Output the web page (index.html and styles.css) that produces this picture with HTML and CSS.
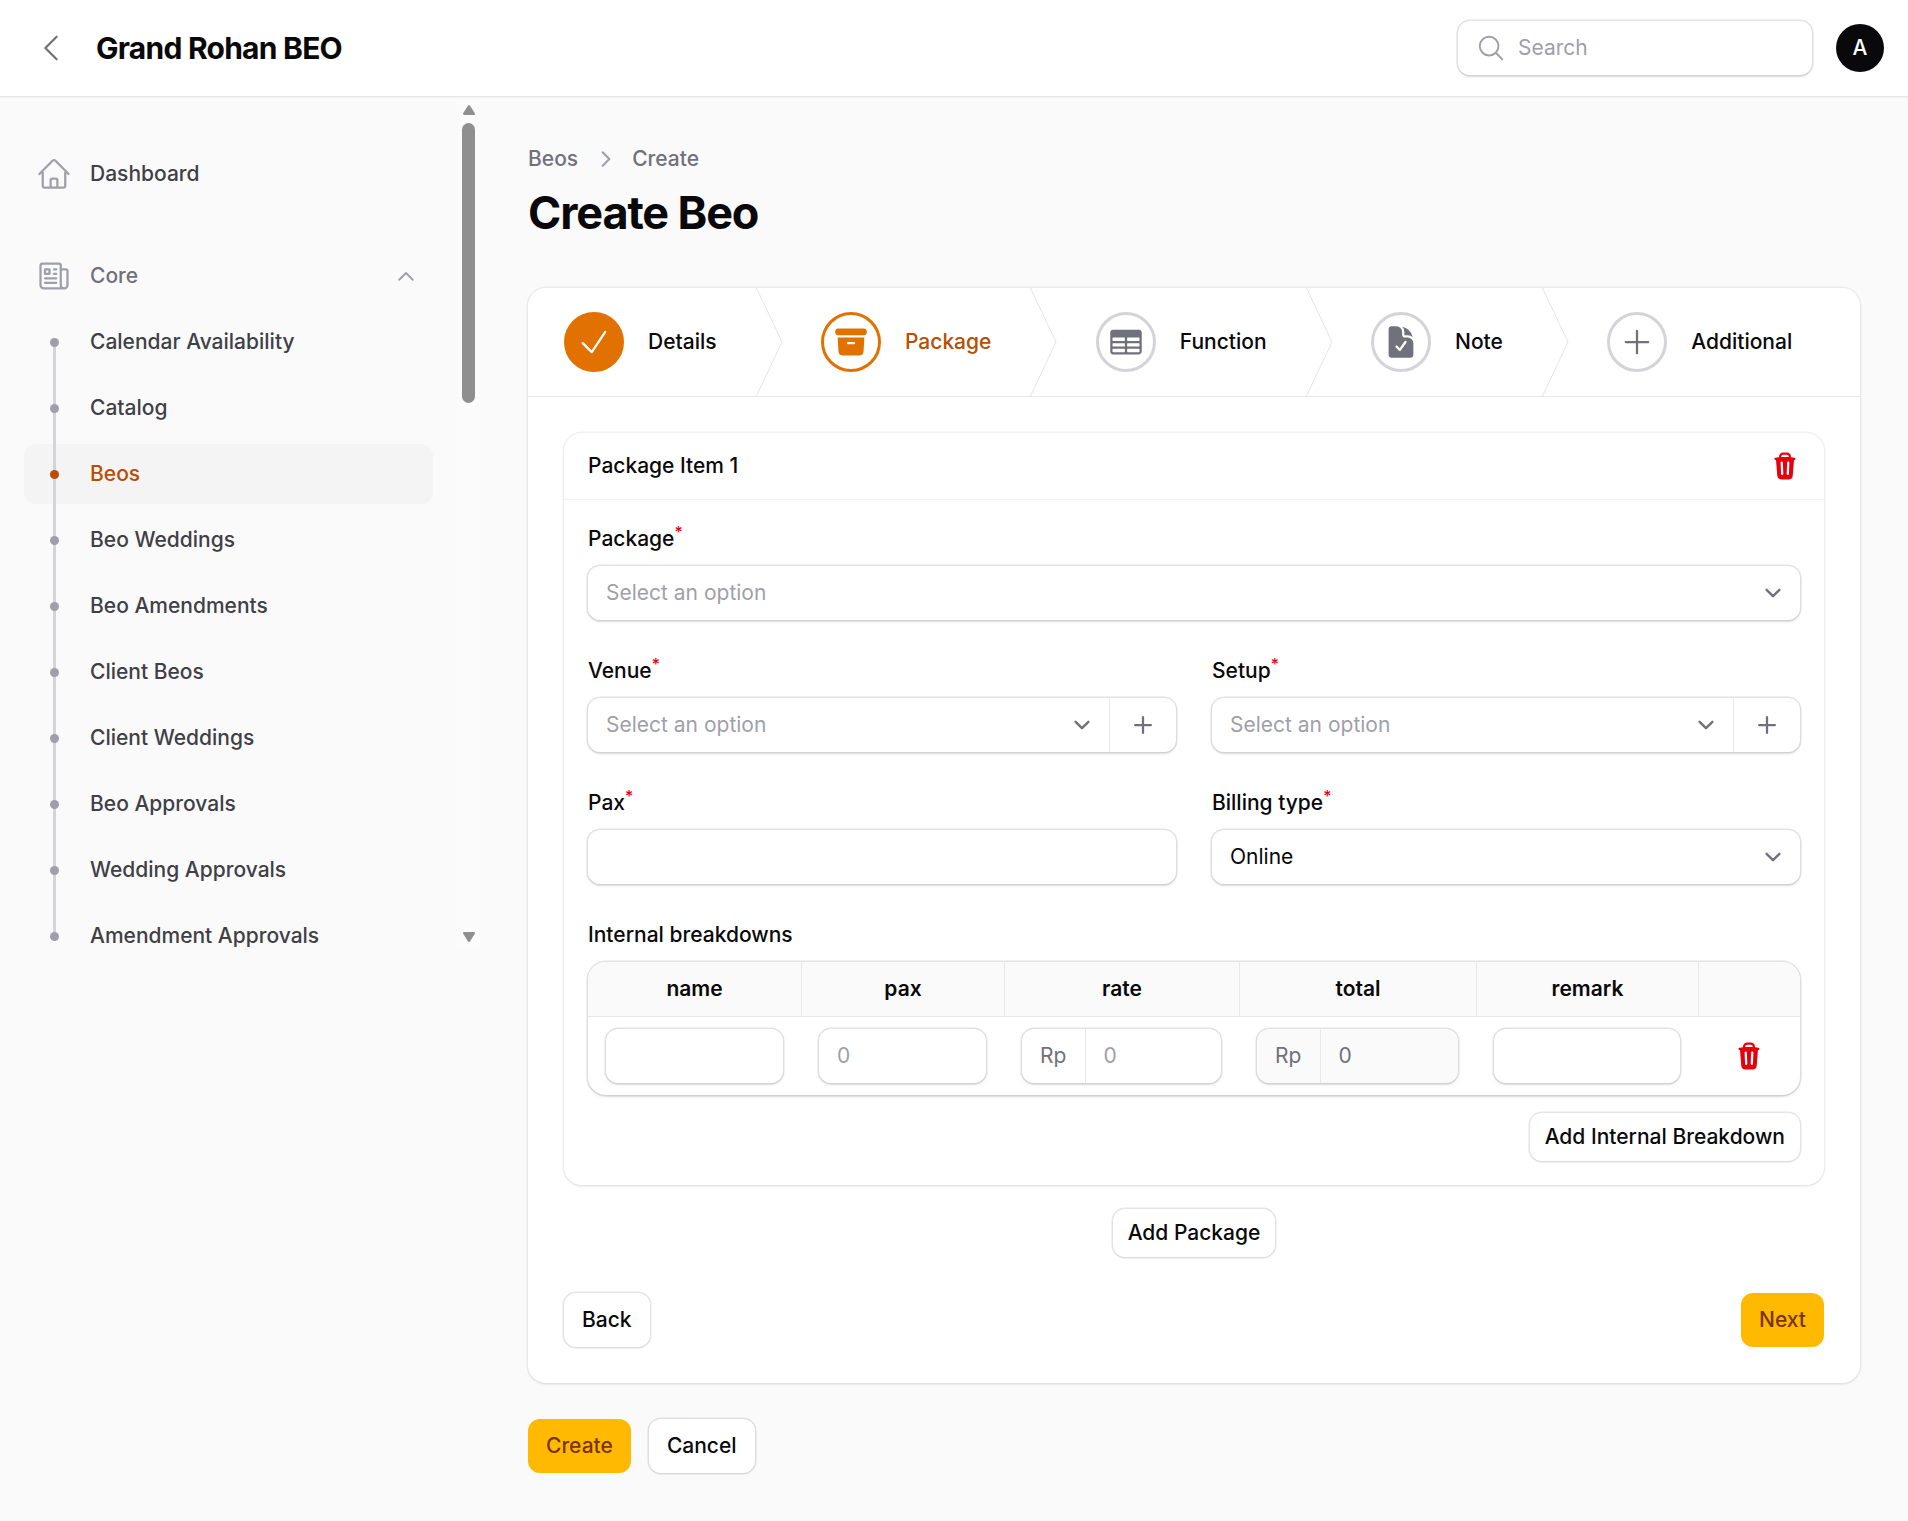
FILE: index.html
```html
<!DOCTYPE html>
<html lang="en">
<head>
<meta charset="UTF-8">
<meta name="viewport" content="width=device-width, initial-scale=1.0">
<title>Create Beo</title>
<link rel="stylesheet" href="styles.css">
</head>
<body>
<svg class="sprite" xmlns="http://www.w3.org/2000/svg">
  <symbol id="i-trash" viewBox="0 0 20 20"><path fill="currentColor" fill-rule="evenodd" clip-rule="evenodd" d="M8.75 1A2.75 2.75 0 006 3.75v.443c-.795.077-1.584.176-2.365.298a.75.75 0 10.23 1.482l.149-.022.841 10.518A2.75 2.75 0 007.596 19h4.807a2.75 2.75 0 002.742-2.53l.841-10.52.149.023a.75.75 0 00.23-1.482A41.03 41.03 0 0014 4.193V3.75A2.75 2.75 0 0011.25 1h-2.5zM10 4c.84 0 1.673.025 2.5.075V3.75c0-.69-.56-1.25-1.25-1.25h-2.5c-.69 0-1.25.56-1.25 1.25v.325C8.327 4.025 9.16 4 10 4zM8.58 7.72a.75.75 0 00-1.5.06l.3 7.5a.75.75 0 101.5-.06l-.3-7.5zm4.34.06a.75.75 0 10-1.5-.06l-.3 7.5a.75.75 0 101.5.06l.3-7.5z"/></symbol>
  <symbol id="i-plus-mini" viewBox="0 0 20 20"><path fill="currentColor" d="M10.75 4.75a.75.75 0 00-1.5 0v4.5h-4.5a.75.75 0 000 1.5h4.5v4.5a.75.75 0 001.5 0v-4.5h4.5a.75.75 0 000-1.5h-4.5v-4.5z"/></symbol>
  <symbol id="i-select" viewBox="0 0 20 20"><path fill="none" stroke="currentColor" stroke-width="1.5" stroke-linecap="round" stroke-linejoin="round" d="M6 8l4 4 4-4"/></symbol>
</svg>

<header class="topbar">
  <svg class="icon-36 back-icon" viewBox="0 0 24 24" fill="none" stroke="currentColor" stroke-width="1.5" stroke-linecap="round" stroke-linejoin="round"><path d="M15.75 19.5L8.25 12l7.5-7.5"/></svg>
  <div class="brand">Grand Rohan BEO</div>
  <div class="search">
    <svg class="icon-30" viewBox="0 0 24 24" fill="none" stroke="currentColor" stroke-width="1.5" stroke-linecap="round" stroke-linejoin="round"><path d="M21 21l-5.197-5.197m0 0A7.5 7.5 0 105.196 5.196a7.5 7.5 0 0010.607 10.607z"/></svg>
    <span>Search</span>
  </div>
  <div class="avatar">A</div>
</header>

<div class="layout">
  <aside class="sidebar">
    <nav class="nav">
      <a class="nav-item nav-top">
        <svg class="icon-36" viewBox="0 0 24 24" fill="none" stroke="currentColor" stroke-width="1.5" stroke-linecap="round" stroke-linejoin="round"><path d="M2.25 12l8.954-8.955a1.125 1.125 0 011.591 0L21.75 12M4.5 9.75v10.125c0 .621.504 1.125 1.125 1.125H9.75v-4.875c0-.621.504-1.125 1.125-1.125h2.25c.621 0 1.125.504 1.125 1.125V21h4.125c.621 0 1.125-.504 1.125-1.125V9.75M8.25 21h8.25"/></svg>
        <span>Dashboard</span>
      </a>
      <div class="nav-group">
        <svg class="icon-36" viewBox="0 0 24 24" fill="none" stroke="currentColor" stroke-width="1.5" stroke-linecap="round" stroke-linejoin="round"><path d="M12 7.5h1.5m-1.5 3h1.5m-7.5 3h7.5m-7.5 3h7.5m3-9h3.375c.621 0 1.125.504 1.125 1.125V18a2.25 2.25 0 01-2.25 2.25M16.5 7.5V18a2.25 2.25 0 002.25 2.25M16.5 7.5V4.875c0-.621-.504-1.125-1.125-1.125H4.125C3.504 3.75 3 4.254 3 4.875V18a2.25 2.25 0 002.25 2.25h13.5M6 7.5h3v3H6v-3z"/></svg>
        <span>Core</span>
        <svg class="icon-30 group-chevron" viewBox="0 0 20 20" fill="none" stroke="currentColor" stroke-width="1.25" stroke-linecap="round" stroke-linejoin="round"><path d="M5.5 12.5L10 8l4.5 4.5"/></svg>
      </div>
      <ul class="sub-list">
        <li class="nav-item"><i class="dot"></i><span>Calendar Availability</span></li>
        <li class="nav-item"><i class="dot"></i><span>Catalog</span></li>
        <li class="nav-item active"><i class="dot"></i><span>Beos</span></li>
        <li class="nav-item"><i class="dot"></i><span>Beo Weddings</span></li>
        <li class="nav-item"><i class="dot"></i><span>Beo Amendments</span></li>
        <li class="nav-item"><i class="dot"></i><span>Client Beos</span></li>
        <li class="nav-item"><i class="dot"></i><span>Client Weddings</span></li>
        <li class="nav-item"><i class="dot"></i><span>Beo Approvals</span></li>
        <li class="nav-item"><i class="dot"></i><span>Wedding Approvals</span></li>
        <li class="nav-item"><i class="dot"></i><span>Amendment Approvals</span></li>
      </ul>
    </nav>
    <div class="scrollbar">
      <svg class="scroll-arrow" viewBox="0 0 11 9"><path d="M5.5 1L10 8H1z"/></svg>
      <div class="scroll-thumb"></div>
      <svg class="scroll-arrow scroll-down" viewBox="0 0 11 9"><path d="M1 1h9L5.5 8z"/></svg>
    </div>
  </aside>

  <main class="main">
    <div class="breadcrumb">
      <span>Beos</span>
      <svg class="icon-30" viewBox="0 0 20 20" fill="none" stroke="currentColor" stroke-width="1.4" stroke-linecap="round" stroke-linejoin="round"><path d="M7.75 5.5L12.25 10l-4.5 4.5"/></svg>
      <span>Create</span>
    </div>
    <h1 class="page-title">Create Beo</h1>

    <section class="card">
      <ul class="steps">
        <li class="step">
          <div class="step-circle done">
            <svg class="icon-36" viewBox="0 0 24 24" fill="none" stroke="currentColor" stroke-width="1.5" stroke-linecap="round" stroke-linejoin="round"><path d="M4.5 12.75l6 6 9-13.5"/></svg>
          </div>
          <span>Details</span>
        </li>
        <li class="step-divider"><svg viewBox="0 0 33 108"><path d="M3 -1L29 54L3 109"/></svg></li>
        <li class="step current">
          <div class="step-circle">
            <svg class="icon-36" viewBox="0 0 24 24" fill="currentColor"><path d="M3.375 3C2.339 3 1.5 3.84 1.5 4.875v.75c0 1.036.84 1.875 1.875 1.875h17.25c1.035 0 1.875-.84 1.875-1.875v-.75C22.5 3.839 21.66 3 20.625 3H3.375z"/><path fill-rule="evenodd" clip-rule="evenodd" d="M3.087 9l.54 9.176A3 3 0 006.62 21h10.757a3 3 0 002.995-2.824L20.913 9H3.087zm6.163 3.75A.75.75 0 0110 12h4a.75.75 0 010 1.5h-4a.75.75 0 01-.75-.75z"/></svg>
          </div>
          <span>Package</span>
        </li>
        <li class="step-divider"><svg viewBox="0 0 33 108"><path d="M3 -1L29 54L3 109"/></svg></li>
        <li class="step">
          <div class="step-circle">
            <svg class="icon-36" viewBox="0 0 24 24" fill="currentColor"><path fill-rule="evenodd" clip-rule="evenodd" d="M1.5 5.625c0-1.036.84-1.875 1.875-1.875h17.25c1.035 0 1.875.84 1.875 1.875v12.75c0 1.035-.84 1.875-1.875 1.875H3.375A1.875 1.875 0 011.5 18.375V5.625zM21 9.375A.375.375 0 0020.625 9h-7.5a.375.375 0 00-.375.375v1.5c0 .207.168.375.375.375h7.5a.375.375 0 00.375-.375v-1.5zm0 3.75a.375.375 0 00-.375-.375h-7.5a.375.375 0 00-.375.375v1.5c0 .207.168.375.375.375h7.5a.375.375 0 00.375-.375v-1.5zm0 3.75a.375.375 0 00-.375-.375h-7.5a.375.375 0 00-.375.375v1.5c0 .207.168.375.375.375h7.5a.375.375 0 00.375-.375v-1.5zM10.875 18.75a.375.375 0 00.375-.375v-1.5a.375.375 0 00-.375-.375h-7.5a.375.375 0 00-.375.375v1.5c0 .207.168.375.375.375h7.5zM3.375 15h7.5a.375.375 0 00.375-.375v-1.5a.375.375 0 00-.375-.375h-7.5a.375.375 0 00-.375.375v1.5c0 .207.168.375.375.375zm0-3.75h7.5a.375.375 0 00.375-.375v-1.5A.375.375 0 0010.875 9h-7.5A.375.375 0 003 9.375v1.5c0 .207.168.375.375.375z"/></svg>
          </div>
          <span>Function</span>
        </li>
        <li class="step-divider"><svg viewBox="0 0 33 108"><path d="M3 -1L29 54L3 109"/></svg></li>
        <li class="step">
          <div class="step-circle">
            <svg class="icon-36" viewBox="0 0 24 24" fill="currentColor"><path fill-rule="evenodd" clip-rule="evenodd" d="M9 1.5H5.625c-1.036 0-1.875.84-1.875 1.875v17.25c0 1.035.84 1.875 1.875 1.875h12.75c1.035 0 1.875-.84 1.875-1.875V12.75A3.75 3.75 0 0016.5 9h-1.875a1.875 1.875 0 01-1.875-1.875V5.25A3.75 3.75 0 009 1.5zm6.61 10.936a.75.75 0 10-1.22-.872l-3.236 4.53L9.53 14.47a.75.75 0 00-1.06 1.06l2.25 2.25a.75.75 0 001.14-.094l3.75-5.25z"/><path d="M12.971 1.816A5.23 5.23 0 0114.25 5.25v1.875c0 .207.168.375.375.375H16.5a5.23 5.23 0 013.434 1.279 9.768 9.768 0 00-6.963-6.963z"/></svg>
          </div>
          <span>Note</span>
        </li>
        <li class="step-divider"><svg viewBox="0 0 33 108"><path d="M3 -1L29 54L3 109"/></svg></li>
        <li class="step">
          <div class="step-circle">
            <svg class="icon-36" viewBox="0 0 24 24" fill="none" stroke="currentColor" stroke-width="1.5" stroke-linecap="round" stroke-linejoin="round"><path d="M12 4.5v15m7.5-7.5h-15"/></svg>
          </div>
          <span>Additional</span>
        </li>
      </ul>

      <div class="card-body">
        <div class="item-card">
          <div class="item-head">
            <span>Package Item 1</span>
            <svg class="icon-30 danger"><use href="#i-trash"/></svg>
          </div>
          <div class="item-body">
            <div class="field">
              <label class="label">Package<sup>*</sup></label>
              <div class="control select">
                <span class="placeholder grow">Select an option</span>
                <svg class="select-chevron"><use href="#i-select"/></svg>
              </div>
            </div>

            <div class="field-row">
              <div class="field">
                <label class="label">Venue<sup>*</sup></label>
                <div class="control select has-add">
                  <span class="placeholder grow">Select an option</span>
                  <svg class="select-chevron"><use href="#i-select"/></svg>
                  <div class="add-cell"><svg class="icon-30"><use href="#i-plus-mini"/></svg></div>
                </div>
              </div>
              <div class="field">
                <label class="label">Setup<sup>*</sup></label>
                <div class="control select has-add">
                  <span class="placeholder grow">Select an option</span>
                  <svg class="select-chevron"><use href="#i-select"/></svg>
                  <div class="add-cell"><svg class="icon-30"><use href="#i-plus-mini"/></svg></div>
                </div>
              </div>
            </div>

            <div class="field-row">
              <div class="field">
                <label class="label">Pax<sup>*</sup></label>
                <div class="control"></div>
              </div>
              <div class="field">
                <label class="label">Billing type<sup>*</sup></label>
                <div class="control select">
                  <span class="grow">Online</span>
                  <svg class="select-chevron"><use href="#i-select"/></svg>
                </div>
              </div>
            </div>

            <div class="field">
              <label class="label">Internal breakdowns</label>
              <div class="table-wrap">
                <table class="breakdowns">
                  <colgroup>
                    <col class="col-name"><col class="col-pax"><col class="col-rate"><col class="col-total"><col class="col-remark"><col class="col-action">
                  </colgroup>
                  <thead>
                    <tr><th>name</th><th>pax</th><th>rate</th><th>total</th><th>remark</th><th></th></tr>
                  </thead>
                  <tbody>
                    <tr>
                      <td class="cell-first"><div class="control"></div></td>
                      <td><div class="control"><span class="placeholder">0</span></div></td>
                      <td>
                        <div class="control money">
                          <span class="prefix">Rp</span>
                          <span class="placeholder">0</span>
                        </div>
                      </td>
                      <td>
                        <div class="control money disabled">
                          <span class="prefix">Rp</span>
                          <span>0</span>
                        </div>
                      </td>
                      <td><div class="control"></div></td>
                      <td class="action-cell"><svg class="icon-30 danger"><use href="#i-trash"/></svg></td>
                    </tr>
                  </tbody>
                </table>
              </div>
            </div>

            <div class="add-row">
              <button type="button" class="btn btn-small">Add Internal Breakdown</button>
            </div>
          </div>
        </div>

        <div class="add-package">
          <button type="button" class="btn btn-small">Add Package</button>
        </div>

        <div class="wizard-footer">
          <button type="button" class="btn">Back</button>
          <button type="button" class="btn btn-primary">Next</button>
        </div>
      </div>
    </section>

    <div class="form-actions">
      <button type="button" class="btn btn-primary">Create</button>
      <button type="button" class="btn">Cancel</button>
    </div>
  </main>
</div>
</body>
</html>
```

FILE: styles.css
```css
* {
  box-sizing: border-box;
}

body {
  margin: 0;
  min-height: 1521px;
  background-color: #fafafa;
  color: #09090b;
  font-family: Inter, "Liberation Sans", sans-serif;
  font-size: 21px;
  font-weight: 500;
  line-height: 30px;
}

ul {
  list-style: none;
  margin: 0;
  padding: 0;
}

.sprite {
  display: none;
}

.icon-36 {
  width: 36px;
  height: 36px;
  flex-shrink: 0;
  display: block;
}

.icon-30 {
  width: 30px;
  height: 30px;
  flex-shrink: 0;
  display: block;
}

/* top bar */
.topbar {
  height: 97px;
  display: flex;
  align-items: center;
  padding: 0 24px 0 33px;
  background-color: #fff;
  border-bottom: 1px solid #e6e6e8;
  box-shadow: 0 1px 2px rgba(0, 0, 0, 0.04);
  position: relative;
}

.back-icon {
  color: #71717b;
}

.brand {
  margin-left: 27px;
  font-size: 30px;
  font-weight: 700;
  letter-spacing: -0.025em;
}

.search {
  margin-left: auto;
  width: 354px;
  height: 54px;
  display: flex;
  align-items: center;
  gap: 12px;
  padding-left: 18px;
  border-radius: 12px;
  background-color: #fff;
  color: #9f9fa9;
  font-weight: 400;
  box-shadow: 0 0 0 1.5px rgba(9, 9, 11, 0.1), 0 1.5px 3px rgba(0, 0, 0, 0.1);
}

.avatar {
  width: 48px;
  height: 48px;
  margin-left: 24px;
  border-radius: 50%;
  background-color: #09090b;
  color: #fff;
  display: flex;
  align-items: center;
  justify-content: center;
}

/* layout */
.layout {
  display: flex;
  align-items: flex-start;
}

.sidebar {
  width: 480px;
  height: 853px;
  flex-shrink: 0;
  display: flex;
}

.nav {
  width: 457px;
  padding: 47px 24px 0;
  overflow: hidden;
}

.nav-item,
.nav-group {
  height: 60px;
  display: flex;
  align-items: center;
  gap: 18px;
  padding: 0 12px;
  border-radius: 12px;
  color: #3f3f46;
}

.nav-item > svg,
.nav-group > svg {
  color: #9f9fa9;
}

.nav-group {
  margin-top: 42px;
  margin-bottom: 6px;
  color: #71717b;
}

.group-chevron {
  margin-left: auto;
}

.sub-list {
  display: flex;
  flex-direction: column;
  gap: 6px;
}

.sub-list .nav-item {
  position: relative;
}

.dot {
  width: 36px;
  height: 36px;
  flex-shrink: 0;
  position: relative;
}

.dot::after {
  content: "";
  position: absolute;
  left: 13.5px;
  top: 13.5px;
  width: 9px;
  height: 9px;
  border-radius: 50%;
  background-color: #9f9fa9;
}

/* line joining the dots */
.dot::before {
  content: "";
  position: absolute;
  left: 16.5px;
  top: -15px;
  width: 3px;
  height: 66px;
  background-color: #d4d4d8;
}

.sub-list li:first-child .dot::before {
  top: 18px;
  height: 33px;
}

.sub-list li:last-child .dot::before {
  height: 33px;
}

.nav-item.active {
  background-color: #f4f4f5;
  color: #bb4d00;
}

.nav-item.active .dot::after {
  background-color: #bb4d00;
}

.scrollbar {
  width: 23px;
  height: 100%;
  display: flex;
  flex-direction: column;
  align-items: center;
  padding: 8px 0;
  background-color: #fbfbfb;
}

.scroll-arrow {
  width: 12px;
  height: 10px;
  flex-shrink: 0;
  fill: #8f8f8f;
  stroke: #8f8f8f;
  stroke-width: 2;
  stroke-linejoin: round;
}

.scroll-down {
  margin-top: auto;
}

.scroll-thumb {
  width: 13px;
  height: 280px;
  margin-top: 8px;
  border-radius: 7px;
  background-color: #8f8f8f;
}

/* main */
.main {
  flex: 1;
  min-width: 0;
  padding: 47px 48px 47px;
}

.breadcrumb {
  display: flex;
  align-items: center;
  gap: 11px;
  color: #71717b;
}

.breadcrumb svg {
  margin-left: 2px;
  color: #9f9fa9;
}

.page-title {
  margin: 12px 0 48px;
  font-size: 45px;
  line-height: 54px;
  font-weight: 700;
  letter-spacing: -0.025em;
}

.card {
  background-color: #fff;
  border-radius: 18px;
  box-shadow: 0 0 0 1.5px rgba(9, 9, 11, 0.05), 0 1.5px 3px rgba(0, 0, 0, 0.05);
}

.steps {
  height: 109px;
  display: flex;
  border-bottom: 1px solid #e8e8e9;
}

.step {
  display: flex;
  align-items: center;
  gap: 24px;
  padding: 0 36px;
}

.step-circle {
  width: 60px;
  height: 60px;
  flex-shrink: 0;
  display: flex;
  align-items: center;
  justify-content: center;
  border-radius: 50%;
  border: 3px solid #d4d4d8;
  color: #71717b;
}

.step-circle.done {
  background-color: #e17100;
  border-color: #e17100;
  color: #fff;
}

.step.current {
  color: #bb4d00;
}

.step.current .step-circle {
  border-color: #e17100;
  color: #e17100;
}

.step-divider {
  width: 32.4px;
  flex-shrink: 0;
}

.step-divider svg {
  display: block;
  width: 33px;
  height: 108px;
  overflow: hidden;
}

.step-divider path {
  fill: none;
  stroke: #e4e4e7;
  stroke-width: 1;
}

.card-body {
  padding: 36px;
}

.item-card {
  border-radius: 18px;
  background-color: #fff;
  box-shadow: 0 0 0 1.5px rgba(9, 9, 11, 0.05), 0 1.5px 3px rgba(0, 0, 0, 0.05);
}

.item-head {
  height: 67px;
  display: flex;
  align-items: center;
  justify-content: space-between;
  padding: 0 24px;
  border-bottom: 1px solid #f1f1f2;
}

.danger {
  color: #e7000b;
}

.item-body {
  padding: 24px;
  display: flex;
  flex-direction: column;
  gap: 36px;
}

.field {
  display: flex;
  flex-direction: column;
  gap: 12px;
  min-width: 0;
}

.field-row {
  display: grid;
  grid-template-columns: 1fr 1fr;
  gap: 36px;
}

.label {
  display: block;
}

.label sup {
  color: #e7000b;
  font-size: 75%;
  line-height: 0;
  position: relative;
  top: -0.5em;
  vertical-align: baseline;
}

.control {
  height: 54px;
  display: flex;
  align-items: center;
  padding: 0 18px;
  border-radius: 12px;
  background-color: #fff;
  font-weight: 400;
  box-shadow: 0 0 0 1.5px rgba(9, 9, 11, 0.1), 0 1.5px 3px rgba(0, 0, 0, 0.1);
}

.placeholder {
  color: #9f9fa9;
}

.grow {
  flex: 1;
}

.select {
  padding-right: 11px;
}

.select-chevron {
  width: 32px;
  height: 32px;
  flex-shrink: 0;
  color: #71717b;
}

.has-add {
  padding-right: 0;
}

.has-add .select-chevron {
  margin-right: 11px;
}

.add-cell {
  width: 67px;
  height: 100%;
  flex-shrink: 0;
  display: flex;
  align-items: center;
  justify-content: center;
  border-left: 1px solid #e8e8e9;
  color: #71717b;
}

.table-wrap {
  border-radius: 18px;
  overflow: hidden;
  background-color: #fff;
  box-shadow: 0 0 0 1.5px rgba(9, 9, 11, 0.1), 0 1.5px 3px rgba(0, 0, 0, 0.1);
}

.breakdowns {
  width: 100%;
  table-layout: fixed;
  border-collapse: separate;
  border-spacing: 0;
}

.col-name { width: 214px; }
.col-pax { width: 203px; }
.col-rate { width: 235px; }
.col-total { width: 237px; }
.col-remark { width: 222px; }
.col-action { width: 101px; }

.breakdowns th {
  height: 54.5px;
  padding: 0;
  background-color: #fafafa;
  border-bottom: 1px solid #e8e8e9;
  border-right: 1px solid #e8e8e9;
  font-weight: 600;
  text-align: center;
}

.breakdowns th:last-child {
  border-right: none;
}

.breakdowns td {
  padding: 12px 19px 12px 17px;
}

.breakdowns td.cell-first {
  padding-left: 18px;
}

.breakdowns .action-cell {
  padding: 0 2px 0 0;
}

.action-cell svg {
  margin: 0 auto;
}

.money {
  padding: 0;
  overflow: hidden;
}

.money .prefix {
  width: 63.5px;
  height: 100%;
  flex-shrink: 0;
  display: flex;
  align-items: center;
  padding-left: 18px;
  margin-right: 18px;
  border-right: 1px solid #e8e8e9;
  color: #71717b;
}

.control.disabled {
  background-color: #fafafa;
  color: #71717b;
}

.add-row {
  display: flex;
  justify-content: flex-end;
  margin-top: -18px;
}

.btn {
  height: 54px;
  padding: 0 18px;
  border: none;
  border-radius: 12px;
  background-color: #fff;
  color: #09090b;
  font: inherit;
  box-shadow: 0 0 0 1.5px rgba(9, 9, 11, 0.1), 0 1px 2px rgba(0, 0, 0, 0.05);
  cursor: pointer;
}

.btn-small {
  height: 48px;
  padding: 0 15px;
}

.btn-primary {
  background-color: #ffb900;
  color: #7b3306;
  box-shadow: none;
}

.add-package {
  display: flex;
  justify-content: center;
  margin-top: 24px;
}

.wizard-footer {
  display: flex;
  justify-content: space-between;
  margin-top: 36px;
}

.form-actions {
  display: flex;
  gap: 18px;
  margin-top: 36px;
}
```
